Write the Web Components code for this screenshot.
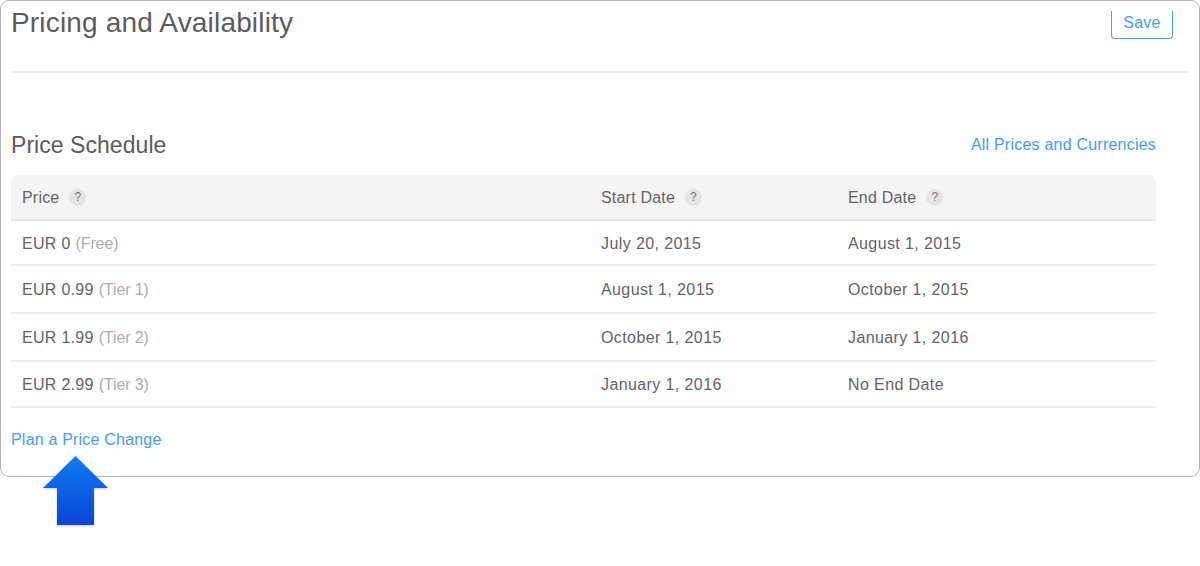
<!DOCTYPE html>
<html>
<head>
<meta charset="utf-8">
<title>Pricing and Availability</title>
<style>
  html, body { margin: 0; background: #fff; }
  body { font-family: "Liberation Sans", Arial, sans-serif; height: 566px; overflow: hidden; }
</style>
</head>
<body>
<pricing-window>
  <page-header slot="header" title="Pricing and Availability"></page-header>
  <section-title slot="section" title="Price Schedule" link="All Prices and Currencies"></section-title>
  <price-table slot="table">
    <table-head></table-head>
    <price-row price="EUR 0" note="(Free)" start="July 20, 2015" end="August 1, 2015" height="45"></price-row>
    <price-row price="EUR 0.99" note="(Tier 1)" start="August 1, 2015" end="October 1, 2015" height="48"></price-row>
    <price-row price="EUR 1.99" note="(Tier 2)" start="October 1, 2015" end="January 1, 2016" height="48"></price-row>
    <price-row price="EUR 2.99" note="(Tier 3)" start="January 1, 2016" end="No End Date" height="46"></price-row>
  </price-table>
  <a slot="footer" style="color:#459bfb;text-decoration:none">Plan a Price Change</a>
</pricing-window>
<up-arrow></up-arrow>

<script>
class PricingWindow extends HTMLElement {
  constructor() {
    super();
    this.attachShadow({ mode: 'open' });
    this.shadowRoot.innerHTML = `
    <style>
      :host {
        display: block;
        box-sizing: border-box;
        height: 477px;
        border: 1px solid #b4b4b4;
        border-radius: 9px;
        padding: 0 43px 0 10px;
        overflow: hidden;
      }
      .footer {
        font-size: 16px;
        line-height: 20px;
        margin-top: 22px;
        letter-spacing: 0.2px;
      }
    </style>
    <slot name="header"></slot>
    <slot name="section"></slot>
    <slot name="table"></slot>
    <div class="footer"><slot name="footer"></slot></div>
    `;
  }
}

class PageHeader extends HTMLElement {
  constructor() {
    super();
    this.attachShadow({ mode: 'open' });
    this.shadowRoot.innerHTML = `
    <style>
      :host {
        display: flex;
        justify-content: space-between;
        align-items: flex-start;
        height: 70px;
        margin-right: -33px;
        border-bottom: 2px solid #ececec;
      }
      h1 {
        margin: 4px 0 0;
        font-size: 28px;
        line-height: 36px;
        font-weight: normal;
        color: #5c5c5c;
        letter-spacing: 0.17px;
      }
      button {
        box-sizing: border-box;
        width: 62px;
        height: 28px;
        margin: 10px 16px 0 0;
        padding: 0 0 4px;
        background: #fff;
        border: 1px solid #4a9dfb;
        border-top: 0;
        border-radius: 0 0 4px 4px;
        color: #4a9dfb;
        font: 16px "Liberation Sans", Arial, sans-serif;
        letter-spacing: 0.2px;
      }
    </style>
    <h1></h1>
    <button>Save</button>
    `;
    this.shadowRoot.querySelector('h1').textContent = this.getAttribute('title');
  }
}

class SectionTitle extends HTMLElement {
  constructor() {
    super();
    this.attachShadow({ mode: 'open' });
    this.shadowRoot.innerHTML = `
    <style>
      :host {
        display: flex;
        justify-content: space-between;
        align-items: center;
        height: 30px;
        margin-top: 57px;
        margin-bottom: 15px;
      }
      h2 {
        margin: 0;
        font-size: 23px;
        font-weight: normal;
        color: #5c5c5c;
        letter-spacing: 0.05px;
      }
      a {
        color: #459bfb;
        font-size: 16px;
        letter-spacing: 0.22px;
      }
    </style>
    <h2></h2>
    <a></a>
    `;
    this.shadowRoot.querySelector('h2').textContent = this.getAttribute('title');
    this.shadowRoot.querySelector('a').textContent = this.getAttribute('link');
  }
}

class PriceTable extends HTMLElement {
  constructor() {
    super();
    this.attachShadow({ mode: 'open' });
    this.shadowRoot.innerHTML = `
    <style>
      :host {
        display: block;
        font-size: 16px;
        color: #646464;
      }
    </style>
    <slot></slot>
    `;
  }
}

class TableHead extends HTMLElement {
  constructor() {
    super();
    this.attachShadow({ mode: 'open' });
    this.shadowRoot.innerHTML = `
    <style>
      :host {
        display: grid;
        grid-template-columns: 579px 247px 1fr;
        align-items: center;
        box-sizing: border-box;
        height: 46px;
        padding: 2px 0 0 11px;
        background: #f4f4f4;
        border-bottom: 2px solid #e6e6e6;
        border-radius: 8px 8px 0 0;
        letter-spacing: 0.2px;
      }
      span.cell { display: flex; align-items: center; gap: 10px; }
      i {
        display: flex;
        justify-content: center;
        align-items: center;
        width: 17px;
        height: 17px;
        margin-bottom: 2px;
        border-radius: 50%;
        background: #e4e4e4;
        color: #777;
        font-size: 12px;
        font-style: normal;
      }
    </style>
    <span class="cell">Price <i>?</i></span>
    <span class="cell">Start Date <i>?</i></span>
    <span class="cell">End Date <i>?</i></span>
    `;
  }
}

class PriceRow extends HTMLElement {
  constructor() {
    super();
    this.attachShadow({ mode: 'open' });
    this.shadowRoot.innerHTML = `
    <style>
      :host {
        display: grid;
        grid-template-columns: 579px 247px 1fr;
        align-items: center;
        box-sizing: border-box;
        padding: 2px 0 0 11px;
        border-bottom: 2px solid #ececec;
        letter-spacing: 0.4px;
      }
      .price { letter-spacing: 0.3px; }
      em { font-style: normal; color: #adadad; letter-spacing: -0.1px; }
    </style>
    <span><span class="price"></span> <em></em></span>
    <span class="start"></span>
    <span class="end"></span>
    `;
    this.style.height = this.getAttribute('height') + 'px';
    this.shadowRoot.querySelector('.price').textContent = this.getAttribute('price');
    this.shadowRoot.querySelector('em').textContent = this.getAttribute('note');
    this.shadowRoot.querySelector('.start').textContent = this.getAttribute('start');
    this.shadowRoot.querySelector('.end').textContent = this.getAttribute('end');
  }
}

// sits over the window's bottom edge, pointing at the link
class UpArrow extends HTMLElement {
  constructor() {
    super();
    this.attachShadow({ mode: 'open' });
    this.shadowRoot.innerHTML = `
    <style>
      :host {
        position: absolute;
        left: 42px;
        top: 455px;
        width: 68px;
        height: 74px;
      }
      svg { display: block; filter: drop-shadow(0 1px 1px rgba(0, 0, 0, 0.2)); }
    </style>
    <svg width="68" height="74" viewBox="0 0 68 74">
      <defs>
        <linearGradient id="fill" x1="0" y1="0" x2="0" y2="1">
          <stop offset="0" stop-color="#0f7cf2"/>
          <stop offset="1" stop-color="#0a45d6"/>
        </linearGradient>
      </defs>
      <path d="M33.5 1 L66 33 L52 33 L52 70 L15 70 L15 33 L1 33 Z" fill="url(#fill)"/>
    </svg>
    `;
  }
}

customElements.define('pricing-window', PricingWindow);
customElements.define('page-header', PageHeader);
customElements.define('section-title', SectionTitle);
customElements.define('price-table', PriceTable);
customElements.define('table-head', TableHead);
customElements.define('price-row', PriceRow);
customElements.define('up-arrow', UpArrow);
</script>
</body>
</html>
